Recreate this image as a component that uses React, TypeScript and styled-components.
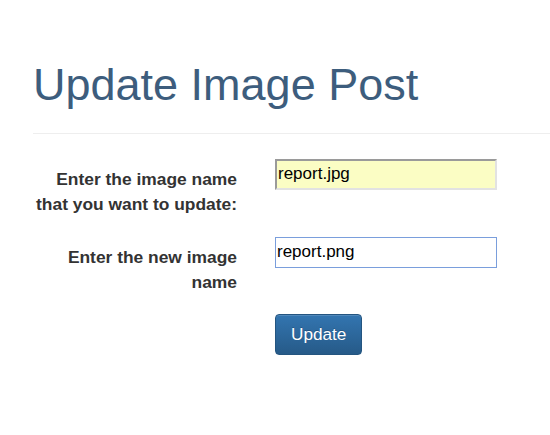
import { useEffect, useRef } from "react";
import styled, { createGlobalStyle } from "styled-components";

const GlobalStyle = createGlobalStyle`
  html, body {
    margin: 0;
    padding: 0;
    background: #fff;
    overflow: hidden;
  }
  body {
    font-family: "Liberation Sans", Arial, sans-serif;
    color: #333;
  }
`;

const Page = styled.div`
  padding: 60px 0 0 33px;
`;

const Title = styled.h1`
  margin: 0;
  font-size: 45px;
  font-weight: 400;
  line-height: 1.1;
  color: #3d5d7d;
`;

const Divider = styled.hr`
  margin: 23px 0 0;
  border: 0;
  border-top: 1px solid #eee;
`;

const Form = styled.form`
  display: grid;
  grid-template-columns: 204px 222px;
  column-gap: 38px;
  row-gap: 20px;
  margin-top: 25px;
`;

const Label = styled.label`
  padding-top: 8px;
  font-size: 17.4px;
  font-weight: 700;
  line-height: 25px;
  text-align: right;
  color: #333;
`;

const Field = styled.input<{ $autofill?: boolean }>`
  box-sizing: border-box;
  width: 222px;
  height: 31px;
  padding: 0 1px;
  font-family: "Liberation Sans", Arial, sans-serif;
  font-size: 17px;
  color: #000;
  outline: none;
  background: ${(p) => (p.$autofill ? "#fbfdc4" : "#fff")};
  border: ${(p) => (p.$autofill ? "2px solid" : "1px solid")};
  border-color: ${(p) =>
    p.$autofill ? "#9a9a9a #e2e2e2 #e2e2e2 #9a9a9a" : "#7a9edc"};
`;

const Actions = styled.div`
  grid-column: 2;
  margin-top: -1px;
`;

const Button = styled.button`
  height: 41px;
  padding: 0 15px;
  font-family: "Liberation Sans", Arial, sans-serif;
  font-size: 17.2px;
  color: #fff;
  text-shadow: 0 -1px 0 rgba(0, 0, 0, 0.2);
  background: linear-gradient(to bottom, #3375b0 0%, #265a88 100%);
  border: 1px solid #245580;
  border-radius: 4px;
  box-shadow: inset 0 1px 0 rgba(255, 255, 255, 0.15);
  cursor: pointer;
`;

export default function App() {
  const newName = useRef<HTMLInputElement>(null);

  useEffect(() => {
    const el = newName.current;
    if (el) {
      el.focus();
      el.setSelectionRange(el.value.length, el.value.length);
    }
  }, []);

  return (
    <Page>
      <GlobalStyle />
      <Title>Update Image Post</Title>
      <Divider />
      <Form onSubmit={(e) => e.preventDefault()}>
        <Label htmlFor="oldName">
          Enter the image name that you want to update:
        </Label>
        <Field id="oldName" $autofill defaultValue="report.jpg" />
        <Label htmlFor="newName">Enter the new image name</Label>
        <Field id="newName" ref={newName} defaultValue="report.png" />
        <Actions>
          <Button type="submit">Update</Button>
        </Actions>
      </Form>
    </Page>
  );
}
